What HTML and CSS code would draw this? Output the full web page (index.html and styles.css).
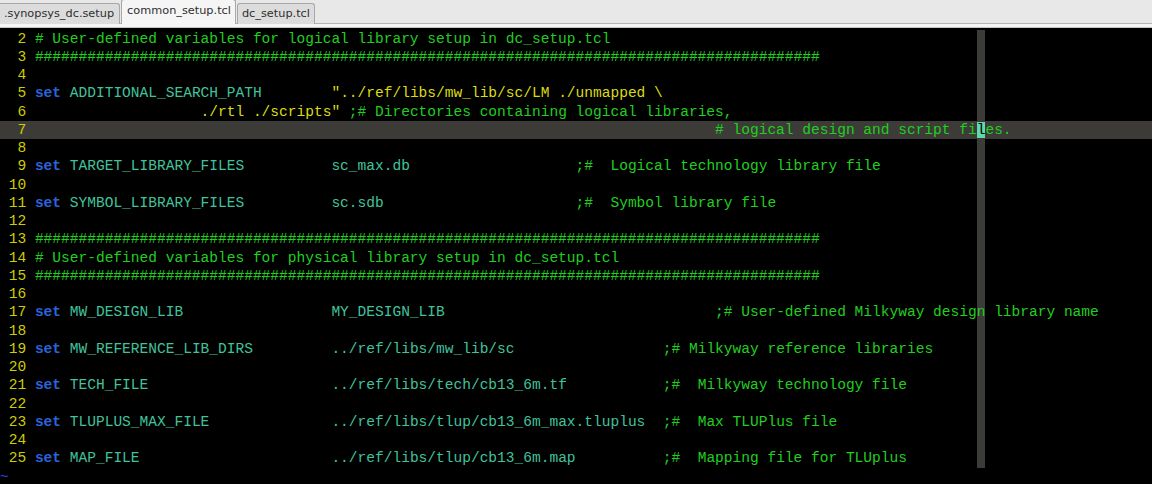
FILE: index.html
```html
<!DOCTYPE html>
<html>
<head>
<meta charset="utf-8">
<link rel="stylesheet" href="styles.css">
</head>
<body>
<div class="tabbar">
  <div class="tab">.synopsys_dc.setup</div>
  <div class="tab active">common_setup.tcl</div>
  <div class="tab">dc_setup.tcl</div>
</div>
<div class="sep"></div>
<div class="editor">
  <div class="colorcol"></div>
<div class="ln"><span class="nr">  2 </span><span class="c"># User-defined variables for logical library setup in dc_setup.tcl</span></div>
<div class="ln"><span class="nr">  3 </span><span class="c">##########################################################################################</span></div>
<div class="ln"><span class="nr">  4 </span></div>
<div class="ln"><span class="nr">  5 </span><span class="k">set</span> <span class="i">ADDITIONAL_SEARCH_PATH</span>        <span class="s">"../ref/libs/mw_lib/sc/LM ./unmapped \</span></div>
<div class="ln"><span class="nr">  6 </span>                   <span class="s">./rtl ./scripts"</span> <span class="c">;# Directories containing logical libraries,</span></div>
<div class="ln cur"><span class="nr">  7 </span>                                                                              <span class="c"># logical design and script fi<span class="cursor">l</span>es.</span></div>
<div class="ln"><span class="nr">  8 </span></div>
<div class="ln"><span class="nr">  9 </span><span class="k">set</span> <span class="i">TARGET_LIBRARY_FILES          sc_max.db</span>                   <span class="c">;#  Logical technology library file</span></div>
<div class="ln"><span class="nr"> 10 </span></div>
<div class="ln"><span class="nr"> 11 </span><span class="k">set</span> <span class="i">SYMBOL_LIBRARY_FILES          sc.sdb</span>                      <span class="c">;#  Symbol library file</span></div>
<div class="ln"><span class="nr"> 12 </span></div>
<div class="ln"><span class="nr"> 13 </span><span class="c">##########################################################################################</span></div>
<div class="ln"><span class="nr"> 14 </span><span class="c"># User-defined variables for physical library setup in dc_setup.tcl</span></div>
<div class="ln"><span class="nr"> 15 </span><span class="c">##########################################################################################</span></div>
<div class="ln"><span class="nr"> 16 </span></div>
<div class="ln"><span class="nr"> 17 </span><span class="k">set</span> <span class="i">MW_DESIGN_LIB                 MY_DESIGN_LIB</span>                               <span class="c">;# User-defined Milkyway design library name</span></div>
<div class="ln"><span class="nr"> 18 </span></div>
<div class="ln"><span class="nr"> 19 </span><span class="k">set</span> <span class="i">MW_REFERENCE_LIB_DIRS         ../ref/libs/mw_lib/sc</span>                 <span class="c">;# Milkyway reference libraries</span></div>
<div class="ln"><span class="nr"> 20 </span></div>
<div class="ln"><span class="nr"> 21 </span><span class="k">set</span> <span class="i">TECH_FILE                     ../ref/libs/tech/cb13_6m.tf</span>           <span class="c">;#  Milkyway technology file</span></div>
<div class="ln"><span class="nr"> 22 </span></div>
<div class="ln"><span class="nr"> 23 </span><span class="k">set</span> <span class="i">TLUPLUS_MAX_FILE              ../ref/libs/tlup/cb13_6m_max.tluplus</span>  <span class="c">;#  Max TLUPlus file</span></div>
<div class="ln"><span class="nr"> 24 </span></div>
<div class="ln"><span class="nr"> 25 </span><span class="k">set</span> <span class="i">MAP_FILE                      ../ref/libs/tlup/cb13_6m.map</span>          <span class="c">;#  Mapping file for TLUplus</span></div>
<div class="ln"><span class="t">~</span></div>
</div>
</body>
</html>
```
FILE: styles.css
```css
html, body {
  margin: 0;
  padding: 0;
  background: #000;
  width: 1152px;
  height: 484px;
  overflow: hidden;
}

.tabbar {
  display: flex;
  align-items: flex-end;
  height: 24px;
  background: #e8e8e8;
  box-sizing: border-box;
  border-bottom: 1px solid #b4b4b4;
}

.tab {
  height: 21px;
  box-sizing: border-box;
  padding: 0 4px;
  margin-right: 1px;
  margin-bottom: -1px;
  background: #dcdcdc;
  border: 1px solid #a8a8a8;
  border-bottom: none;
  border-radius: 3px 3px 0 0;
  font-family: "DejaVu Sans", sans-serif;
  font-size: 11.3px;
  line-height: 19px;
  color: #2e2e2e;
  white-space: nowrap;
}

.tab:first-child {
  border-left: none;
  border-radius: 0 3px 0 0;
  padding-right: 5px;
}

.tab.active {
  height: 25px;
  line-height: 22px;
  background: #f5f5f5;
  padding: 0 4px 0 5px;
}

.sep {
  height: 4px;
  box-sizing: border-box;
  background: #f5f5f5;
  border-bottom: 1px solid #c4c4c4;
}

.editor {
  position: relative;
  padding-top: 1.7px;
  font-family: "Liberation Mono", monospace;
  font-size: 14.54px;
  line-height: 18.26px;
  color: #d0d0d0;
}

.colorcol {
  position: absolute;
  left: 112ch;
  top: 1.7px;
  width: 1ch;
  height: 438.2px;
  background: #3c3b37;
  z-index: 0;
}

.ln {
  height: 18.26px;
  white-space: pre;
}

.ln > span {
  position: relative;
  z-index: 1;
}

.ln.cur {
  background: #3c3b37;
}

.nr { color: #cdcd00; }
.c { color: #20cf20; }
.k { color: #2a64dc; font-weight: bold; }
.i { color: #40c39c; }
.s { color: #dcdc10; }
.t { color: #1c4fe0; }

.cursor {
  background: #5fd7af;
  color: #000;
}
```
